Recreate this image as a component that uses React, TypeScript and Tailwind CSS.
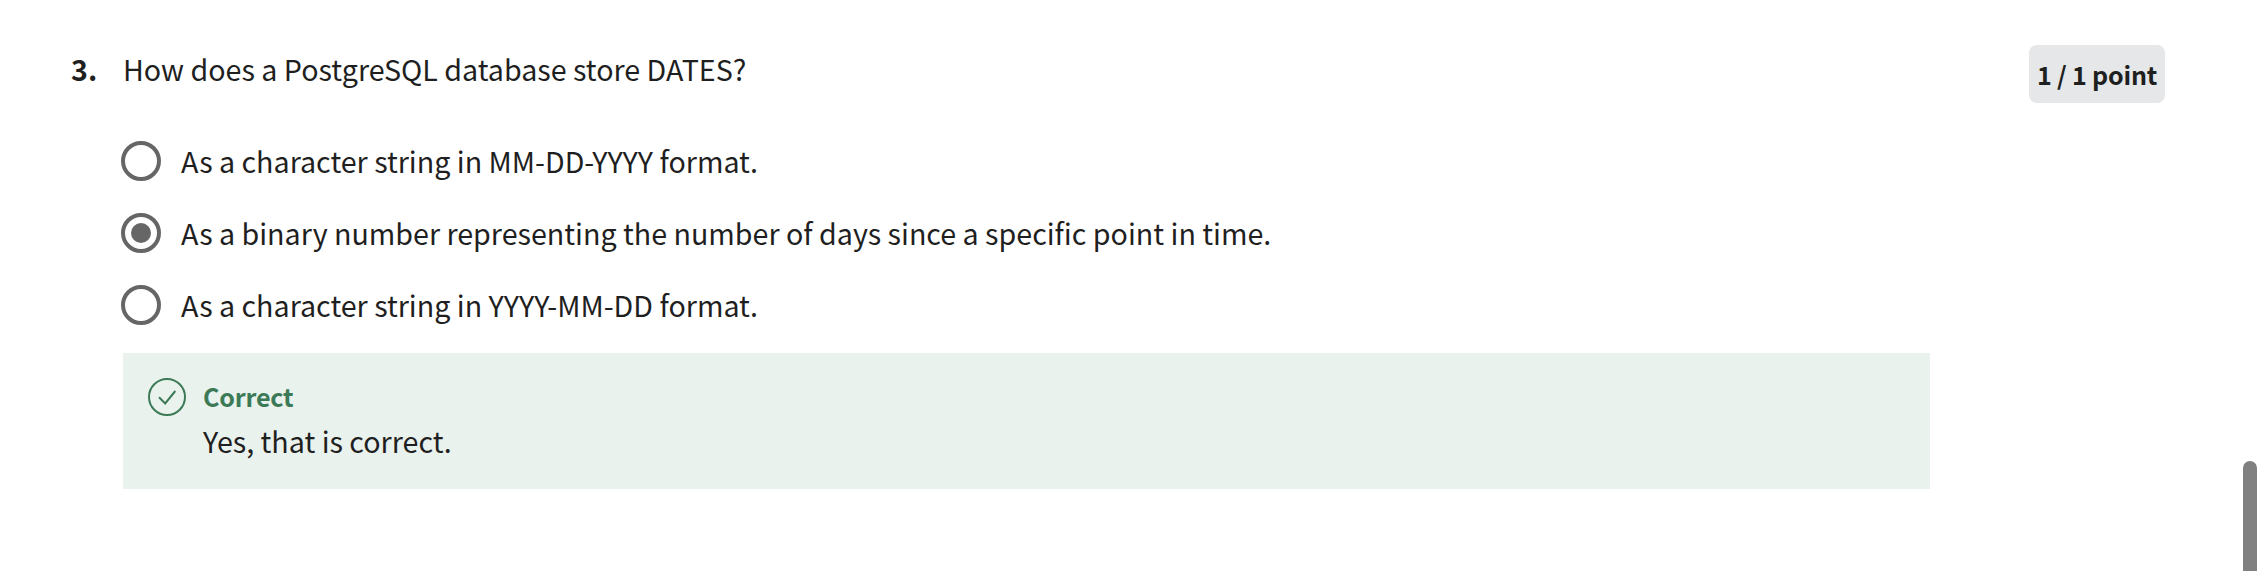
const options = [
  { label: 'As a character string in MM-DD-YYYY format.', selected: false },
  { label: 'As a binary number representing the number of days since a specific point in time.', selected: true },
  { label: 'As a character string in YYYY-MM-DD format.', selected: false },
];

function Radio({ label, selected }: { label: string; selected: boolean }) {
  return (
    <label className="flex h-10 items-center gap-5">
      <span
        role="radio"
        aria-checked={selected}
        className="flex size-10 shrink-0 items-center justify-center rounded-full border-4 border-[#666666]"
      >
        {selected && <span className="size-5 rounded-full bg-[#666666]" />}
      </span>
      <span className="whitespace-nowrap">{label}</span>
    </label>
  );
}

function Feedback() {
  return (
    <div className="ml-0.5 mt-7 flex h-[136px] w-[1807px] bg-[#e9f2ed] pl-[25px] pt-[25px]">
      <svg className="size-[38px] shrink-0" viewBox="0 0 38 38" fill="none" stroke="#3c7a57">
        <circle cx="19" cy="19" r="18" strokeWidth="2" />
        <path d="M11 19.2L17.2 25.5L27.3 13" strokeWidth="2" />
      </svg>
      <div className="ml-[17px]">
        <div className="text-[25.07px] leading-9 font-bold tracking-[-0.2px] text-[#3c7a57]">Correct</div>
        <div className="mt-[9px]">Yes, that is correct.</div>
      </div>
    </div>
  );
}

export default function App() {
  return (
    <main className="flex h-[571px] w-[2261px] justify-between overflow-hidden bg-white font-['Noto_Sans_CJK_SC',sans-serif] text-[28.65px] leading-9 text-[#1f1f1f]">
      <div className="flex pl-[71px] pt-[51px]">
        <div className="w-[50px] font-bold">3.</div>
        <div>
          <h2 className="ml-0.5 whitespace-nowrap">How does a PostgreSQL database store DATES?</h2>
          <div className="mt-[54px] flex flex-col gap-8" role="radiogroup">
            {options.map((option) => (
              <Radio key={option.label} {...option} />
            ))}
          </div>
          <Feedback />
        </div>
      </div>
      <div className="flex">
        <div className="mt-[45px] flex h-[58px] w-[136px] items-center justify-center rounded-lg bg-[#e5e7e8] text-[25.07px] font-bold tracking-[-0.2px] whitespace-nowrap">
          1 / 1 point
        </div>
        <div className="mt-[461px] mr-1 ml-[78px] h-[110px] w-3.5 rounded-t-full bg-[#808080]" />
      </div>
    </main>
  );
}
